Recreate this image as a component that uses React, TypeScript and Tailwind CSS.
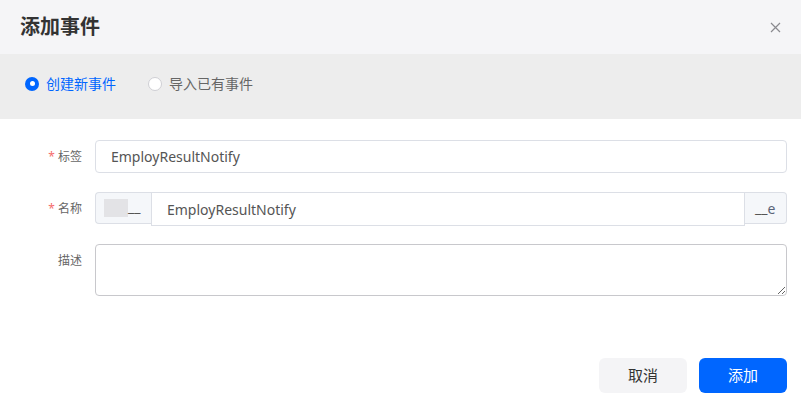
import React from "react";

const font = { fontFamily: '"Noto Sans", "Noto Sans CJK SC", sans-serif' };

export default function App() {
  return (
    <div className="w-[801px] h-[404px] bg-white overflow-hidden flex flex-col" style={font}>
      <div className="h-[54px] bg-[#f5f5f7] flex items-center justify-between pl-[20px] pr-[20px]">
        <div className="text-[20px] font-bold text-[#333] leading-none">添加事件</div>
        <svg width="11" height="11" viewBox="0 0 11 11">
          <path d="M1 1 L10 10 M10 1 L1 10" stroke="#8a8a8f" strokeWidth="1.2" />
        </svg>
      </div>
      <div className="h-[65px] bg-[#ededed] flex items-center pl-[25px] pb-[6px]">
        <div className="flex items-center">
          <span className="w-[14px] h-[14px] rounded-full bg-[#0066ff] flex items-center justify-center">
            <span className="w-[5px] h-[5px] rounded-full bg-white" />
          </span>
          <span className="ml-[7px] text-[14px] text-[#0066ff]">创建新事件</span>
        </div>
        <div className="flex items-center ml-[32px]">
          <span className="w-[14px] h-[14px] rounded-full bg-white border border-[#cfcfd4]" />
          <span className="ml-[7px] text-[14px] text-[#666]">导入已有事件</span>
        </div>
      </div>
      <div className="flex flex-col pt-[21px] pl-[48px] pr-[14px]">
        <div className="flex items-center h-[33px]">
          <div className="w-[47px] flex justify-end pr-[13px] text-[12px] text-[#666]">
            <span className="text-[#f56c6c] mr-[3px]">*</span>标签
          </div>
          <div className="flex-1 h-[33px] border border-[#dcdfe6] rounded-[4px] flex items-center pl-[15px] text-[14px] text-[#555]">
            EmployResultNotify
          </div>
        </div>
        <div className="flex items-start h-[34px] mt-[19px]">
          <div className="w-[47px] h-[33px] flex items-center justify-end pr-[13px] text-[12px] text-[#666]">
            <span className="text-[#f56c6c] mr-[3px]">*</span>名称
          </div>
          <div className="w-[56px] h-[32px] bg-[#f5f7fa] border border-[#dcdfe6] border-r-0 rounded-l-[4px] flex items-center pl-[8px] text-[14px] text-[#555]">
            <span className="w-[24px] h-[18px] bg-[#e3e3e6]" />
            <span className="leading-none -mt-[2px]">__</span>
          </div>
          <div className="flex-1 h-[34px] border border-[#dcdfe6] flex items-center pl-[15px] text-[14px] text-[#555]">
            EmployResultNotify
          </div>
          <div className="w-[42px] h-[32px] bg-[#f5f7fa] border border-[#dcdfe6] border-l-0 rounded-r-[4px] flex items-center pl-[10px] text-[14px] text-[#555]">
            <span className="leading-none">__</span><span className="text-[#5a6478]">e</span>
          </div>
        </div>
        <div className="flex items-start mt-[18px]">
          <div className="w-[47px] pt-[8px] flex justify-end pr-[13px] text-[12px] text-[#666]">描述</div>
          <textarea className="flex-1 h-[52px] border border-[#c8c8cc] rounded-[4px] outline-none" />
        </div>
      </div>
      <div className="flex justify-end gap-[12px] pr-[14px] mt-[62px]">
        <button className="w-[88px] h-[35px] rounded-[6px] bg-[#f4f4f6] text-[15px] text-[#333]">取消</button>
        <button className="w-[88px] h-[35px] rounded-[6px] bg-[#0066ff] text-[15px] text-white">添加</button>
      </div>
    </div>
  );
}
